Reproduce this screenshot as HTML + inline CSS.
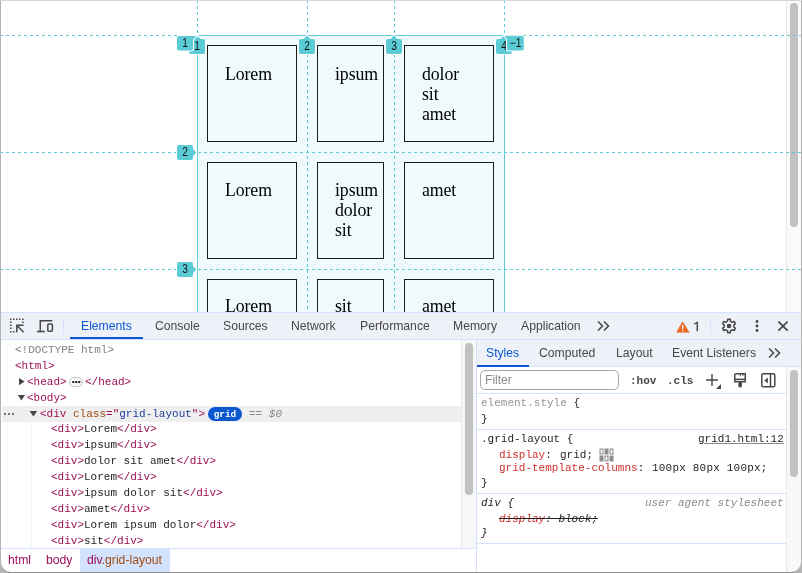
<!DOCTYPE html>
<html><head><meta charset="utf-8">
<style>
*{box-sizing:border-box;margin:0;padding:0}
html,body{width:802px;height:573px;overflow:hidden;background:#fff;position:relative}
body{font-family:"Liberation Sans",sans-serif;color:#1f1f1f}
.a{position:absolute}
.tab,.row,.txt,.lab{will-change:transform}
/* page viewport */
#vp{position:absolute;left:0;top:0;width:802px;height:312px;overflow:hidden;background:#fff}
.fill{position:absolute;background:#eefafb}
.sl{position:absolute;background:#5ccbd5}
.dh{position:absolute;height:1px;background:repeating-linear-gradient(90deg,#5ccbd5 0 3px,transparent 3px 6px)}
.dv{position:absolute;width:1px;background:repeating-linear-gradient(180deg,#5ccbd5 0 3px,transparent 3px 6px)}
.box{position:absolute;border:1px solid #1b1b1b}
.txt{position:absolute;font-family:"Liberation Serif",serif;font-size:17.8px;letter-spacing:-0.1px;line-height:19.8px;color:#000;white-space:nowrap}
.lab{position:absolute;width:16px;height:15px;background:#5ccbd5;border-radius:2px;font-size:11px;line-height:15px;text-align:center;color:#111;box-shadow:0 0 0 1px #fff}
/* devtools */
#dt{position:static}
.tb{position:absolute;left:0;top:0;width:802px;height:27px;background:#eef1f8;border-top:1px solid #d3e3fd;border-bottom:1px solid #d3e3fd}
.tab{position:absolute;top:0;font-size:12.2px;line-height:27px;color:#474747;white-space:nowrap}
.mono{font-family:"Liberation Mono",monospace;font-size:11px;white-space:pre}
.row{position:absolute;left:0;height:16px;line-height:16px;white-space:pre;font-family:"Liberation Mono",monospace;font-size:11px;color:#1f1f1f}
.t{color:#9b0e55}
.an{color:#a04a10}
.av{color:#1e3f9e}
</style></head>
<body>
<div id="vp">
  <!-- page scrollbar -->
  <div class="a" style="left:786px;top:0;width:16px;height:312px;background:#fafafa;border-left:1px solid #e8e8e8"></div>
  <div class="a" style="left:790px;top:3px;width:8px;height:224px;background:#c1c1c1;border-radius:4px"></div>
  <!-- container fill -->
  <div class="fill" style="left:197px;top:35px;width:308px;height:280px"></div>
  <!-- boxes -->
  <div class="box" style="left:207px;top:45px;width:90px;height:97px"></div>
  <div class="box" style="left:317px;top:45px;width:67px;height:97px"></div>
  <div class="box" style="left:404px;top:45px;width:90px;height:97px"></div>
  <div class="box" style="left:207px;top:162px;width:90px;height:97px"></div>
  <div class="box" style="left:317px;top:162px;width:67px;height:97px"></div>
  <div class="box" style="left:404px;top:162px;width:90px;height:97px"></div>
  <div class="box" style="left:207px;top:279px;width:90px;height:97px"></div>
  <div class="box" style="left:317px;top:279px;width:67px;height:97px"></div>
  <div class="box" style="left:404px;top:279px;width:90px;height:97px"></div>
  <!-- texts -->
  <div class="txt" style="left:224.8px;top:65px">Lorem</div>
  <div class="txt" style="left:334.8px;top:65px">ipsum</div>
  <div class="txt" style="left:421.8px;top:65px">dolor<br>sit<br>amet</div>
  <div class="txt" style="left:224.8px;top:181px">Lorem</div>
  <div class="txt" style="left:334.8px;top:181px">ipsum<br>dolor<br>sit</div>
  <div class="txt" style="left:421.8px;top:181px">amet</div>
  <div class="txt" style="left:224.8px;top:297px">Lorem</div>
  <div class="txt" style="left:334.8px;top:297px">sit</div>
  <div class="txt" style="left:421.8px;top:297px">amet</div>
  <!-- solid container lines -->
  <div class="sl" style="left:197px;top:35px;width:308px;height:1px"></div>
  <div class="sl" style="left:197px;top:35px;width:1px;height:280px"></div>
  <div class="sl" style="left:504px;top:35px;width:1px;height:280px"></div>
  <!-- dashed extension lines -->
  <div class="dh" style="left:0;top:35px;width:197px"></div>
  <div class="dh" style="left:505px;top:35px;width:296px"></div>
  <div class="dh" style="left:0;top:152px;width:801px"></div>
  <div class="dh" style="left:0;top:269px;width:801px"></div>
  <div class="dv" style="left:197px;top:0;height:35px"></div>
  <div class="dv" style="left:504px;top:0;height:35px"></div>
  <div class="dv" style="left:307px;top:0;height:312px"></div>
  <div class="dv" style="left:394px;top:0;height:312px"></div>
  <!-- labels -->
  <svg class="a" style="left:0;top:0" width="786" height="312" viewBox="0 0 786 312">
    <path d="M191 39H193.5L197 35.6L200.5 39H203Q205 39 205 41V52Q205 54 203 54H191Q189 54 189 52V41Q189 39 191 39Z" fill="#5bccd6" stroke="#fff" stroke-width="2" paint-order="stroke"/>
    <text transform="translate(197.0 50.1) scale(0.85 1)" text-anchor="middle" font-family="Liberation Sans" font-size="12" fill="#111">1</text>
    <path d="M301 39H303.5L307 35.6L310.5 39H313Q315 39 315 41V52Q315 54 313 54H301Q299 54 299 52V41Q299 39 301 39Z" fill="#5bccd6" stroke="#fff" stroke-width="2" paint-order="stroke"/>
    <text transform="translate(307.0 50.1) scale(0.85 1)" text-anchor="middle" font-family="Liberation Sans" font-size="12" fill="#111">2</text>
    <path d="M388 39H390.5L394 35.6L397.5 39H400Q402 39 402 41V52Q402 54 400 54H388Q386 54 386 52V41Q386 39 388 39Z" fill="#5bccd6" stroke="#fff" stroke-width="2" paint-order="stroke"/>
    <text transform="translate(394.0 50.1) scale(0.85 1)" text-anchor="middle" font-family="Liberation Sans" font-size="12" fill="#111">3</text>
    <path d="M498 39H500.5L504 35.6L507.5 39H510Q512 39 512 41V52Q512 54 510 54H498Q496 54 496 52V41Q496 39 498 39Z" fill="#5bccd6" stroke="#fff" stroke-width="2" paint-order="stroke"/>
    <text transform="translate(504.0 50.1) scale(0.85 1)" text-anchor="middle" font-family="Liberation Sans" font-size="12" fill="#111">4</text>
    <path d="M179 36H196.6L193 39.6V48.6Q193 50.6 191 50.6H179Q177 50.6 177 48.6V38Q177 36 179 36Z" fill="#5bccd6" stroke="#fff" stroke-width="2" paint-order="stroke"/>
    <text transform="translate(185.0 46.9) scale(0.85 1)" text-anchor="middle" font-family="Liberation Sans" font-size="12" fill="#111">1</text>
    <path d="M504.4 35.8H521.8Q523.8 36 523.8 38V48.6Q523.8 50.6 521.8 50.6H509Q507 50.6 507 48.6V39.2Z" fill="#5bccd6" stroke="#fff" stroke-width="2" paint-order="stroke"/>
    <text transform="translate(515.6 46.9) scale(0.85 1)" text-anchor="middle" font-family="Liberation Sans" font-size="12" fill="#111">−1</text>
    <path d="M179 145.0H191Q193 145.0 193 147.0V149.0L196.4 152.5L193 156.0V158.0Q193 160.0 191 160.0H179Q177 160.0 177 158.0V147.0Q177 145.0 179 145.0Z" fill="#5bccd6" stroke="#fff" stroke-width="2" paint-order="stroke"/>
    <text transform="translate(185.0 155.8) scale(0.85 1)" text-anchor="middle" font-family="Liberation Sans" font-size="12" fill="#111">2</text>
    <path d="M179 262.0H191Q193 262.0 193 264.0V266.0L196.4 269.5L193 273.0V275.0Q193 277.0 191 277.0H179Q177 277.0 177 275.0V264.0Q177 262.0 179 262.0Z" fill="#5bccd6" stroke="#fff" stroke-width="2" paint-order="stroke"/>
    <text transform="translate(185.0 272.8) scale(0.85 1)" text-anchor="middle" font-family="Liberation Sans" font-size="12" fill="#111">3</text>
  </svg>

</div>

<div id="dt">
  <div class="a" style="left:0;top:312px;width:802px;height:261px;background:#fff"></div>
  <div class="a" style="left:0;top:312px;width:802px;height:28px;background:#eef1f8;border-top:1px solid #d3e3fd;border-bottom:1px solid #d3e3fd"></div>
  <!-- toolbar icons -->
  <svg class="a" style="left:8px;top:317px" width="18" height="18" viewBox="0 0 18 18">
    <g fill="#474747">
      <rect x="2" y="1.5" width="1.5" height="1.5"/><rect x="5" y="1.5" width="1.5" height="1.5"/><rect x="8" y="1.5" width="1.5" height="1.5"/><rect x="11" y="1.5" width="1.5" height="1.5"/><rect x="14.2" y="1.5" width="1.5" height="1.5"/>
      <rect x="2" y="4.5" width="1.5" height="1.5"/><rect x="2" y="7.5" width="1.5" height="1.5"/><rect x="2" y="10.5" width="1.5" height="1.5"/><rect x="2" y="14" width="1.5" height="1.5"/>
      <rect x="14.2" y="4.5" width="1.5" height="1.5"/><rect x="5" y="14" width="1.5" height="1.5"/>
    </g>
    <path d="M8.8 15.2V8.3H15.6M8.8 8.3L15.6 15.2" stroke="#474747" stroke-width="1.5" fill="none"/>
  </svg>
  <svg class="a" style="left:36px;top:318px" width="18" height="16" viewBox="0 0 18 16">
    <path d="M4.3 12.8V2.8H16.3" stroke="#474747" stroke-width="1.5" fill="none"/>
    <path d="M1 13.5H8.8" stroke="#474747" stroke-width="1.6" fill="none"/>
    <rect x="11.8" y="6" width="4.6" height="7.3" rx="1" stroke="#474747" stroke-width="1.5" fill="none"/>
  </svg>
  <div class="a" style="left:63px;top:318px;width:1px;height:16px;background:#d3e3fd"></div>
  <div class="tabs">
    <div class="tab" style="top:313px;left:81px;color:#0b57d0">Elements</div>
    <div class="a" style="left:70px;top:337px;width:73px;height:2px;background:#0b57d0"></div>
    <div class="tab" style="top:313px;left:154.5px">Console</div>
    <div class="tab" style="top:313px;left:222.5px">Sources</div>
    <div class="tab" style="top:313px;left:290.5px">Network</div>
    <div class="tab" style="top:313px;left:359.5px">Performance</div>
    <div class="tab" style="top:313px;left:452.5px">Memory</div>
    <div class="tab" style="top:313px;left:521px">Application</div>
  </div>
  <svg class="a" style="left:595.6px;top:319px" width="16" height="14" viewBox="0 0 16 14">
    <path d="M2 2.5L6.5 7L2 11.5M8 2.5L12.5 7L8 11.5" stroke="#4a4a4a" stroke-width="1.6" fill="none"/>
  </svg>
  <!-- right toolbar -->
  <svg class="a" style="left:676px;top:320.5px" width="14" height="12" viewBox="0 0 14 12">
    <path d="M6.6 0.7L13.2 11.3H0.6Z" fill="#ea6a26" stroke="#ea6a26" stroke-width="0.5" stroke-linejoin="round"/>
    <rect x="6" y="4" width="1.3" height="4" fill="#fff"/><rect x="6" y="9" width="1.3" height="1.3" fill="#fff"/>
  </svg>
  <svg class="a" style="left:692px;top:320px" width="8" height="13" viewBox="0 0 8 13">
    <path d="M5.3 2V11.2" stroke="#474747" stroke-width="1.5" fill="none"/>
    <path d="M5.6 2L2.2 4.2" stroke="#474747" stroke-width="1.3" fill="none"/>
  </svg>
  <div class="a" style="left:710px;top:318px;width:1px;height:16px;background:#d3e3fd"></div>
  <svg class="a" style="left:721px;top:318px" width="16" height="16" viewBox="0 0 16 16">
    <path d="M5.50 3.67 L6.54 3.22 L6.68 1.23 L9.32 1.23 L9.46 3.22 L10.50 3.67 L11.41 4.34 L13.21 3.47 L14.52 5.75 L12.87 6.88 L13.00 8.00 L12.87 9.12 L14.52 10.25 L13.21 12.53 L11.41 11.66 L10.50 12.33 L9.46 12.78 L9.32 14.77 L6.68 14.77 L6.54 12.78 L5.50 12.33 L4.59 11.66 L2.79 12.53 L1.48 10.25 L3.13 9.12 L3.00 8.00 L3.13 6.88 L1.48 5.75 L2.79 3.47 L4.59 4.34Z" fill="none" stroke="#474747" stroke-width="1.5" stroke-linejoin="round"/>
    <circle cx="8" cy="8" r="2.3" fill="#474747"/>
  </svg>
  <svg class="a" style="left:751px;top:318px" width="12" height="16" viewBox="0 0 12 16">
    <circle cx="6" cy="3.5" r="1.45" fill="#474747"/><circle cx="6" cy="8" r="1.45" fill="#474747"/><circle cx="6" cy="12.5" r="1.45" fill="#474747"/>
  </svg>
  <svg class="a" style="left:775px;top:319px" width="15" height="15" viewBox="0 0 15 15">
    <path d="M3.4 2.6L12.6 11.6M12.6 2.6L3.4 11.6" stroke="#474747" stroke-width="1.7" fill="none"/>
  </svg>

  <!-- elements tree -->
  <div class="a" style="left:2px;top:406px;width:459px;height:16px;background:#efefef"></div>
  <div class="a" style="left:31px;top:422px;width:1px;height:126px;background:#eef1f8"></div>
  <div class="row" style="left:15px;top:342.0px;color:#808080">&lt;!DOCTYPE html&gt;</div>
  <div class="row t" style="left:15px;top:357.88px">&lt;html&gt;</div>
  <div class="row t" style="left:27.4px;top:373.76px">&lt;head&gt;</div><div class="row t" style="left:85.2px;top:373.76px">&lt;/head&gt;</div>
  <svg class="a" style="left:18px;top:377px" width="8" height="10" viewBox="0 0 8 10"><path d="M1 1L6.6 4.6L1 8.2Z" fill="#474747"/></svg>
  <div class="a" style="left:69px;top:377px;width:14px;height:10px;border:1px solid #c4c4c4;border-radius:5px;background:#f8f8f8"></div>
  <svg class="a" style="left:69px;top:377px" width="14" height="10" viewBox="0 0 14 10"><rect x="3.3" y="4" width="2" height="2" fill="#1f1f1f"/><rect x="6.3" y="4" width="2" height="2" fill="#1f1f1f"/><rect x="9.3" y="4" width="2" height="2" fill="#1f1f1f"/></svg>
  <div class="row t" style="left:27.4px;top:389.64px">&lt;body&gt;</div>
  <svg class="a" style="left:17px;top:394px" width="10" height="8" viewBox="0 0 10 8"><path d="M0.8 1H8L4.4 6.5Z" fill="#474747"/></svg>
  <div class="row" style="left:39.7px;top:405.52px"><span class="t">&lt;div</span> <span class="an">class</span><span class="t">="</span><span class="av">grid-layout</span><span class="t">"&gt;</span></div>
  <svg class="a" style="left:28.5px;top:410px" width="10" height="8" viewBox="0 0 10 8"><path d="M0.6 1H8.2L4.4 6.5Z" fill="#474747"/></svg>
  <svg class="a" style="left:3px;top:410px" width="12" height="8" viewBox="0 0 12 8"><circle cx="2" cy="4" r="1" fill="#474747"/><circle cx="6" cy="4" r="1" fill="#474747"/><circle cx="10" cy="4" r="1" fill="#474747"/></svg>
  <div class="a" style="left:208px;top:407px;width:34px;height:14px;border-radius:7px;background:#0b57d0"></div><div class="a" style="left:208.3px;top:407.6px;width:34px;height:14px;color:#fff;font-family:'Liberation Mono',monospace;font-size:9.4px;font-weight:bold;line-height:14px;text-align:center;will-change:transform">grid</div>
  <div class="row" style="left:249px;top:405.52px;color:#8a8a8a">== <i>$0</i></div>
  <div class="row" style="left:50.8px;top:421.4px"><span class="t">&lt;div&gt;</span>Lorem<span class="t">&lt;/div&gt;</span></div>
  <div class="row" style="left:50.8px;top:437.28px"><span class="t">&lt;div&gt;</span>ipsum<span class="t">&lt;/div&gt;</span></div>
  <div class="row" style="left:50.8px;top:453.16px"><span class="t">&lt;div&gt;</span>dolor sit amet<span class="t">&lt;/div&gt;</span></div>
  <div class="row" style="left:50.8px;top:469.04px"><span class="t">&lt;div&gt;</span>Lorem<span class="t">&lt;/div&gt;</span></div>
  <div class="row" style="left:50.8px;top:484.92px"><span class="t">&lt;div&gt;</span>ipsum dolor sit<span class="t">&lt;/div&gt;</span></div>
  <div class="row" style="left:50.8px;top:500.8px"><span class="t">&lt;div&gt;</span>amet<span class="t">&lt;/div&gt;</span></div>
  <div class="row" style="left:50.8px;top:516.68px"><span class="t">&lt;div&gt;</span>Lorem ipsum dolor<span class="t">&lt;/div&gt;</span></div>
  <div class="row" style="left:50.8px;top:532.56px"><span class="t">&lt;div&gt;</span>sit<span class="t">&lt;/div&gt;</span></div>
  <!-- elements scrollbar -->
  <div class="a" style="left:461px;top:340px;width:15px;height:208px;background:#f7f7f7;border-left:1px solid #e8e8e8"></div>
  <div class="a" style="left:465px;top:343px;width:8px;height:152px;background:#c1c1c1;border-radius:4px"></div>
  <!-- breadcrumbs -->
  <div class="a" style="left:0;top:548px;width:476px;height:25px;background:#fff;border-top:1px solid #d3e3fd"></div>
  <div class="a" style="left:79.5px;top:549px;width:90.5px;height:24px;background:#d3e3fd"></div>
  <div class="tab t" style="left:8px;top:551.7px;line-height:16px">html</div>
  <div class="tab t" style="left:46px;top:551.7px;line-height:16px">body</div>
  <div class="tab" style="left:86.7px;top:551.7px;line-height:16px"><span class="t">div</span><span class="an">.grid-layout</span></div>

  <!-- styles pane -->
  <div class="a" style="left:476px;top:340px;width:1px;height:233px;background:#d3e3fd"></div>
  <div class="a" style="left:477px;top:340px;width:325px;height:27px;background:#eef1f8;border-bottom:1px solid #d3e3fd"></div>
  <div class="tab" style="left:486px;top:340px;color:#0b57d0">Styles</div>
  <div class="a" style="left:477px;top:365px;width:52px;height:2px;background:#0b57d0"></div>
  <div class="tab" style="left:538.5px;top:340px">Computed</div>
  <div class="tab" style="left:615.8px;top:340px">Layout</div>
  <div class="tab" style="left:671.6px;top:340px">Event Listeners</div>
  <svg class="a" style="left:766.5px;top:346px" width="16" height="14" viewBox="0 0 16 14">
    <path d="M2 2.5L6.5 7L2 11.5M8 2.5L12.5 7L8 11.5" stroke="#4a4a4a" stroke-width="1.6" fill="none"/>
  </svg>
  <div class="a" style="left:480px;top:370px;width:139px;height:20px;border:1px solid #a8a8a8;border-radius:5px;background:#fff"></div>
  <div class="tab" style="left:484.8px;top:372.3px;line-height:16px;font-size:12.1px;color:#8a8a8a">Filter</div>
  <div class="row" style="left:630.2px;top:373px;font-weight:bold;color:#474747">:hov</div>
  <div class="row" style="left:666.5px;top:373px;font-weight:bold;color:#474747">.cls</div>
  <svg class="a" style="left:704px;top:372px" width="20" height="18" viewBox="0 0 20 18">
    <path d="M2 8H14M8 2V14" stroke="#474747" stroke-width="1.4" fill="none"/>
    <path d="M17 12V17H12Z" fill="#474747"/>
  </svg>
  <svg class="a" style="left:732px;top:372px" width="16" height="17" viewBox="0 0 16 17">
    <path d="M4.2 1.75H13.25V9.85H2.75V3.2Q2.75 1.75 4.2 1.75Z" stroke="#474747" stroke-width="1.5" fill="none"/>
    <path d="M2.7 7.4H13.3" stroke="#474747" stroke-width="1.5"/>
    <rect x="6.4" y="10" width="3.5" height="5.5" rx="1.4" fill="#474747"/>
    <path d="M8.5 1.8L8.2 4.3M11.2 1.8L10.9 3.8" stroke="#474747" stroke-width="1"/>
  </svg>
  <svg class="a" style="left:760px;top:372px" width="16" height="16" viewBox="0 0 16 16">
    <rect x="1.8" y="1.8" width="13" height="13" rx="1.6" stroke="#474747" stroke-width="1.5" fill="none"/>
    <path d="M10.5 2V15" stroke="#474747" stroke-width="1.5"/>
    <path d="M7.8 5.4V11.6L4.3 8.5Z" fill="#474747"/>
  </svg>
  <div class="a" style="left:477px;top:393px;width:309px;height:1px;background:#d3e3fd"></div>
  <!-- element.style -->
  <div class="row" style="left:481px;top:395px;color:#959595">element.style <span style="color:#1f1f1f">{</span></div>
  <div class="row" style="left:481px;top:411px">}</div>
  <div class="a" style="left:477px;top:429px;width:309px;height:1px;background:#d3e3fd"></div>
  <div class="row" style="left:481px;top:431px">.grid-layout {</div>
  <div class="row" style="left:697.5px;top:431px;text-decoration:underline;text-decoration-color:#8a8a8a;text-underline-offset:1px">grid1.html:12</div>
  <div class="row" style="left:498.7px;top:447px"><span style="color:#d0302a">display</span>:</div><div class="row" style="left:559.5px;top:447px">grid;</div>
  <svg class="a" style="left:599px;top:448px" width="15" height="14" viewBox="0 0 15 14">
    <g fill="none" stroke="#8f8f8f" stroke-width="1.1"><rect x="1.05" y="1.05" width="2.9" height="4.9"/><rect x="11.05" y="1.05" width="2.9" height="4.9"/><rect x="6.05" y="8.05" width="2.9" height="4.9"/></g>
    <g fill="#8f8f8f"><rect x="5.5" y="0.5" width="4" height="6"/><rect x="0.5" y="7.5" width="4" height="6"/><rect x="10.5" y="7.5" width="4" height="6"/></g>
  </svg>
  <div class="row" style="left:498.7px;top:460px"><span style="color:#d0302a">grid-template-columns</span>:</div><div class="row" style="left:652px;top:460px;letter-spacing:0.2px">100px 80px 100px;</div>
  <div class="row" style="left:481px;top:475px">}</div>
  <div class="a" style="left:477px;top:493px;width:309px;height:1px;background:#d3e3fd"></div>
  <div class="row" style="left:481px;top:495px;font-style:italic">div {</div>
  <div class="row" style="left:644.8px;top:495px;font-style:italic;color:#8a8a8a">user agent stylesheet</div>
  <div class="row" style="left:498.7px;top:511px;font-style:italic;text-decoration:line-through"><span style="color:#d0302a">display</span>: block;</div>
  <div class="row" style="left:481px;top:525px;font-style:italic">}</div>
  <div class="a" style="left:477px;top:543px;width:309px;height:1px;background:#d3e3fd"></div>
  <!-- styles scrollbar -->
  <div class="a" style="left:786px;top:367px;width:16px;height:206px;background:#f8f8f8;border-left:1px solid #e8e8e8"></div>
  <div class="a" style="left:790px;top:370px;width:8px;height:107px;background:#c1c1c1;border-radius:4px"></div>
</div>

<!-- window frame -->
<svg class="a" style="left:0;top:0" width="802" height="573" viewBox="0 0 802 573">
  <path fill-rule="evenodd" fill="#b4b4b4" d="M0 0H802V573H0Z M1 1H801V562A10 10 0 0 1 791 572H11A10 10 0 0 1 1 562Z"/>
  <rect x="0" y="0" width="802" height="1" fill="#d5d5d5"/>
  <rect x="8" y="572" width="786" height="1" fill="#8f8f8f"/>
</svg>
</body></html>
